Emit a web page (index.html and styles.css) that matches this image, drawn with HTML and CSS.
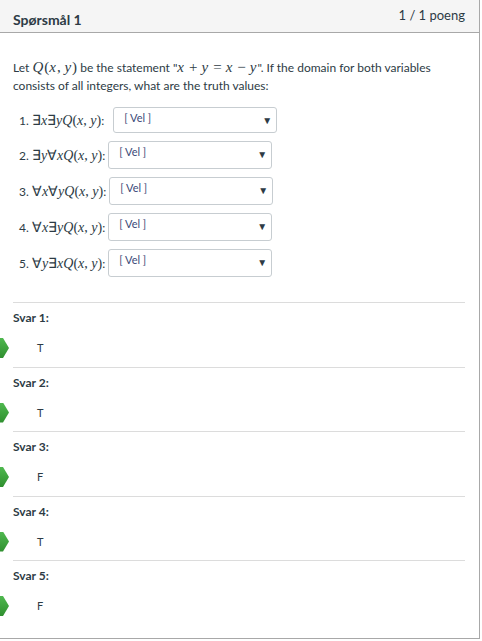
FILE: index.html
```html
<!DOCTYPE html>
<html>
<head>
<meta charset="utf-8">
<link rel="stylesheet" href="styles.css">
</head>
<body>
<div class="card">
  <div class="header">
    <span class="title">Spørsmål 1</span>
    <span class="points">1 / 1 poeng</span>
  </div>
  <div class="body">
    <p class="question">Let <span class="m">Q</span><span class="r">(</span><span class="m">x</span><span class="r">, </span><span class="m">y</span><span class="r">)</span> be the statement "<span class="m">x</span><span class="r op">+</span><span class="m">y</span><span class="r op">=</span><span class="m">x</span><span class="r op">−</span><span class="m">y</span>". If the domain for both variables consists of all integers, what are the truth values:</p>
    <div class="rows">
      <div class="row row1"><span class="lbl">1. <span class="r">∃</span><span class="m">x</span><span class="r">∃</span><span class="m">y</span><span class="m">Q</span><span class="r">(</span><span class="m">x</span><span class="r">, </span><span class="m">y</span><span class="r">)</span>:</span><span class="sel sel1"><span class="vel">[ Vel ]</span><span class="tri">▼</span></span></div>
      <div class="row"><span class="lbl">2. <span class="r">∃</span><span class="m">y</span><span class="r">∀</span><span class="m">x</span><span class="m">Q</span><span class="r">(</span><span class="m">x</span><span class="r">, </span><span class="m">y</span><span class="r">)</span>:</span><span class="sel"><span class="vel">[ Vel ]</span><span class="tri">▼</span></span></div>
      <div class="row"><span class="lbl">3. <span class="r">∀</span><span class="m">x</span><span class="r">∀</span><span class="m">y</span><span class="m">Q</span><span class="r">(</span><span class="m">x</span><span class="r">, </span><span class="m">y</span><span class="r">)</span>:</span><span class="sel"><span class="vel">[ Vel ]</span><span class="tri">▼</span></span></div>
      <div class="row"><span class="lbl">4. <span class="r">∀</span><span class="m">x</span><span class="r">∃</span><span class="m">y</span><span class="m">Q</span><span class="r">(</span><span class="m">x</span><span class="r">, </span><span class="m">y</span><span class="r">)</span>:</span><span class="sel"><span class="vel">[ Vel ]</span><span class="tri">▼</span></span></div>
      <div class="row"><span class="lbl">5. <span class="r">∀</span><span class="m">y</span><span class="r">∃</span><span class="m">x</span><span class="m">Q</span><span class="r">(</span><span class="m">x</span><span class="r">, </span><span class="m">y</span><span class="r">)</span>:</span><span class="sel"><span class="vel">[ Vel ]</span><span class="tri">▼</span></span></div>
    </div>
    <div class="answers">
      <div class="ans"><div class="alabel">Svar 1:</div><div class="aval"><span class="arrow"></span>T</div></div>
      <div class="ans"><div class="alabel">Svar 2:</div><div class="aval"><span class="arrow"></span>T</div></div>
      <div class="ans"><div class="alabel">Svar 3:</div><div class="aval"><span class="arrow"></span>F</div></div>
      <div class="ans"><div class="alabel">Svar 4:</div><div class="aval"><span class="arrow"></span>T</div></div>
      <div class="ans"><div class="alabel">Svar 5:</div><div class="aval"><span class="arrow"></span>F</div></div>
    </div>
  </div>
</div>
</body>
</html>
```
FILE: styles.css
```css
html, body {
  margin: 0;
  padding: 0;
  background: #fff;
}
body {
  font-family: Lato, "Noto Sans", sans-serif;
  color: #2d3b45;
  font-size: 12px;
}
.card {
  box-sizing: border-box;
  width: 480px;
  height: 639px;
  border-right: 1px solid #a8a8a8;
  border-bottom: 1px solid #a8a8a8;
  overflow: hidden;
}
.header {
  height: 33px;
  box-sizing: border-box;
  background: #f5f5f5;
  border-bottom: 1px solid #a8a8a8;
  display: flex;
  justify-content: space-between;
  align-items: flex-start;
  padding: 0 14px 0 13px;
}
.title {
  font-weight: bold;
  font-size: 14px;
  line-height: 16px;
  margin-top: 12px;
}
.points {
  font-size: 13px;
  line-height: 16px;
  margin-top: 7px;
}
.body {
  padding: 0 14px 0 13px;
}
.question {
  margin: 26px 0 0 0;
  max-width: 436px;
  line-height: 18px;
  font-size: 12px;
}
.m {
  font-family: "Liberation Serif", serif;
  font-style: italic;
  font-size: 15px;
  line-height: 1;
  padding-right: 1px;
}
.r {
  font-family: "Liberation Serif", serif;
  font-size: 15px;
  line-height: 1;
}
.lbl .m {
  font-size: 14px;
  padding-right: 0;
}
.lbl .r {
  font-size: 14px;
}
.op {
  padding: 0 4px;
}
.rows {
  margin-top: 12px;
  display: flex;
  flex-direction: column;
  gap: 8px;
  padding-left: 6px;
}
.row {
  display: flex;
  align-items: center;
  height: 28px;
}
.row1 {
  height: 26px;
}
.lbl {
  font-size: 12px;
  margin-right: 3px;
  white-space: nowrap;
}
.sel {
  width: 164px;
  height: 28px;
  box-sizing: border-box;
  border: 1px solid #c7cdd1;
  border-radius: 3px;
  display: flex;
  justify-content: space-between;
  align-items: flex-start;
  padding: 0 4px 0 10px;
  background: #fff;
}
.sel1 {
  height: 26px;
  margin-left: 6px;
}
.vel {
  font-size: 11px;
  line-height: 13px;
  color: #3a4a78;
  margin-top: 3px;
}
.tri {
  font-size: 10px;
  line-height: 12px;
  color: #2d3b45;
  margin-top: 6px;
}
.answers {
  margin-top: 25px;
}
.ans {
  border-top: 1px solid #dcdcdc;
  height: 64.5px;
  box-sizing: border-box;
}
.alabel {
  font-weight: bold;
  font-size: 12px;
  line-height: 15px;
  margin-top: 7px;
}
.aval {
  position: relative;
  margin-top: 15px;
  padding-left: 24px;
  font-size: 11px;
  line-height: 15px;
  color: #2d3b45;
}
.arrow {
  position: absolute;
  left: -13px;
  top: -2px;
  width: 9px;
  height: 20px;
  background: linear-gradient(#4fb84f, #2f8f2f);
  clip-path: polygon(0 0, 3px 0, 9px 50%, 3px 100%, 0 100%);
}
```
